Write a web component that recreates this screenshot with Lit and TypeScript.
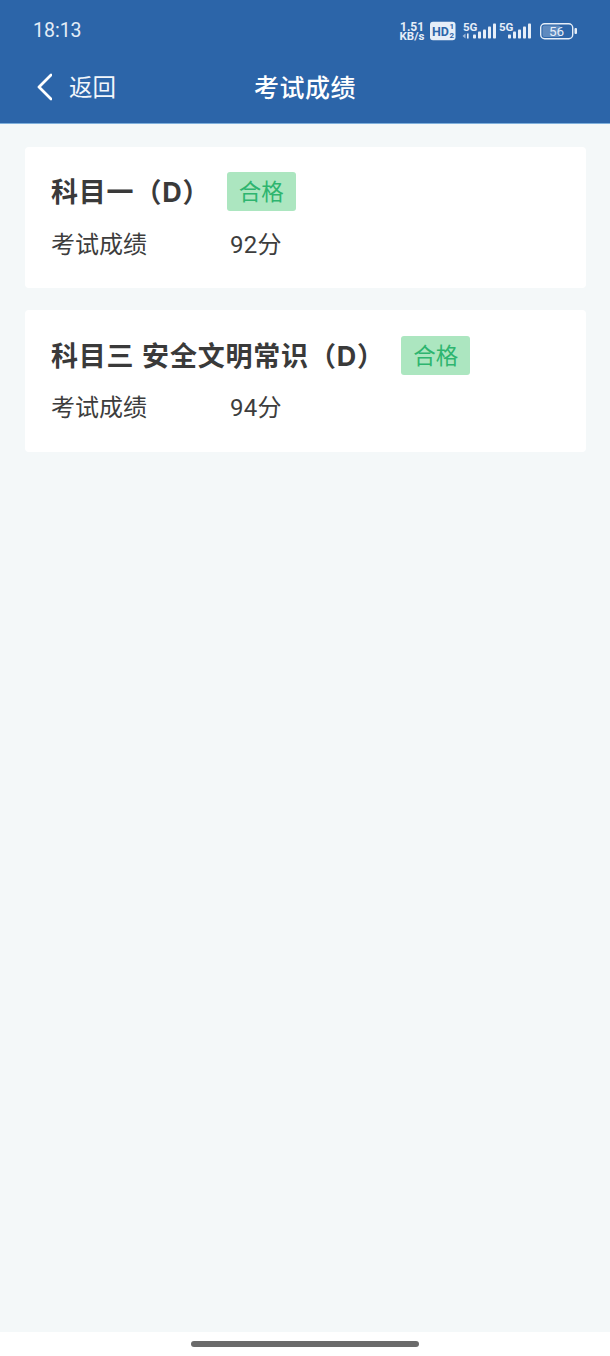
import { LitElement, html, css, svg } from "lit";
import { customElement } from "lit/decorators.js";

const bars = (x: number) =>
  [4, 7, 9, 12, 15].map(
    (h, i) => svg`<rect x=${x + i * 5} y=${20.5 - h} width="3" height=${h} rx="0.8" fill="#e6eef8"></rect>`
  );

@customElement("app-root")
export class AppRoot extends LitElement {
  static styles = css`
    :host {
      display: flex;
      flex-direction: column;
      width: 610px;
      height: 1356px;
      background: #f4f8f9;
      font-family: Roboto, "Noto Sans CJK SC", "Noto Sans", sans-serif;
      color: #333;
    }
    .head {
      height: 123px;
      background: #2c65a9;
      color: #fff;
      display: flex;
      flex-direction: column;
      flex: none;
      border-bottom: 1px solid #7fb0dc;
    }
    .status {
      height: 60px;
      display: flex;
      align-items: center;
      justify-content: space-between;
      padding: 0 32px 0 33px;
      flex: none;
    }
    .time {
      font-size: 19.5px;
      color: #e4edf7;
    }
    .icons {
      display: flex;
      align-items: center;
      margin-top: -1px;
    }
    .nav {
      position: relative;
      height: 56px;
      box-sizing: border-box;
      padding: 0 0 2px 36px;
      display: flex;
      align-items: center;
    }
    .back {
      display: flex;
      align-items: center;
      gap: 17px;
      font-size: 23.5px;
      color: #f2f6fb;
    }
    .back span {
      padding-bottom: 2px;
    }
    .back svg {
      display: block;
    }
    .title {
      position: absolute;
      left: 0;
      right: 0;
      padding-bottom: 2px;
      text-align: center;
      font-size: 25px;
      font-weight: 500;
      letter-spacing: 0.5px;
    }
    .list {
      flex: 1;
      padding: 22.5px 24px 0 25px;
      display: flex;
      flex-direction: column;
      gap: 22.8px;
    }
    .card {
      background: #fff;
      border-radius: 4px;
      height: 141.2px;
      box-sizing: border-box;
      padding: 25.5px 26px 0;
    }
    .row {
      display: flex;
      align-items: center;
      height: 39px;
    }
    .name {
      font-family: Inter, "Noto Sans CJK SC", sans-serif;
      font-size: 27px;
      font-weight: 700;
      letter-spacing: 0.8px;
      word-spacing: 0.5px;
      color: #3a3a3a;
      white-space: pre;
      padding-bottom: 2px;
    }
    .tag {
      background: #ace6c0;
      color: #2eb56f;
      font-size: 22.5px;
      border-radius: 3px;
      width: 69px;
      height: 39px;
      box-sizing: border-box;
      padding-bottom: 3px;
      display: flex;
      align-items: center;
      justify-content: center;
      margin-left: 16.5px;
    }
    .score {
      display: flex;
      align-items: center;
      margin-top: 17px;
      height: 28px;
      font-size: 24px;
      color: #3d3d3d;
    }
    .score .label {
      width: 179px;
    }
    .score .value {
      letter-spacing: 0.3px;
    }
    .foot {
      height: 24px;
      box-sizing: border-box;
      background: #fff;
      flex: none;
      display: flex;
      justify-content: center;
      padding-top: 9px;
    }
    .pill {
      width: 228px;
      height: 6px;
      border-radius: 3px;
      background: #6b6b6b;
    }
    .sb {
      font-family: Roboto, sans-serif;
      font-weight: 700;
    }
  `;

  private renderStatusIcons() {
    return svg`<svg width="179" height="24" viewBox="0 0 179 24">
      <text class="sb" x="1" y="12.7" font-size="12" fill="#e6eef8">1.51</text>
      <text class="sb" x="0.5" y="22.3" font-size="11.5" fill="#e6eef8">KB/s</text>
      <rect x="31" y="3.7" width="25.5" height="18.5" rx="3" fill="#e6eef8"></rect>
      <text class="sb" x="33" y="17.5" font-size="12.5" fill="#2c65a9">HD</text>
      <text class="sb" x="50.5" y="10.8" font-size="8" fill="#2c65a9">1</text>
      <text class="sb" x="50.5" y="20" font-size="8" fill="#2c65a9">2</text>
      <text class="sb" x="64" y="13" font-size="11.5" fill="#e6eef8">5G</text>
      <path d="M63.5 18l3-2.5v5z" fill="#9db9da"></path>
      <rect x="68" y="15.5" width="1.6" height="5" fill="#e6eef8"></rect>
      ${bars(74)}
      <text class="sb" x="100" y="13" font-size="11.5" fill="#e6eef8">5G</text>
      ${bars(109)}
      <rect x="141.7" y="5.7" width="32" height="15" rx="4" fill="none" stroke="#e6eef8" stroke-width="1.4"></rect>
      <rect x="143.5" y="7.5" width="18" height="11.4" rx="2" fill="#e6eef8" opacity="0.28"></rect>
      <text x="150" y="18" font-size="13.5" fill="#e6eef8" font-family="Roboto, sans-serif">56</text>
      <rect x="175.5" y="10" width="2.5" height="6" rx="1" fill="#e6eef8"></rect>
    </svg>`;
  }

  private card(name: string, score: string) {
    return html`<div class="card">
      <div class="row"><span class="name">${name}</span><span class="tag">合格</span></div>
      <div class="score"><span class="label">考试成绩</span><span class="value">${score}</span></div>
    </div>`;
  }

  render() {
    return html`
      <div class="head">
        <div class="status">
          <span class="time">18:13</span>
          <div class="icons">${this.renderStatusIcons()}</div>
        </div>
        <div class="nav">
          <div class="back">
            <svg width="16" height="28" viewBox="0 0 16 28">
              <path d="M15 2 3 14l12 12" fill="none" stroke="#fff" stroke-width="2.8" stroke-linecap="round" stroke-linejoin="round"></path>
            </svg>
            <span>返回</span>
          </div>
          <div class="title">考试成绩</div>
        </div>
      </div>
      <div class="list">
        ${this.card("科目一（D）", "92分")}
        ${this.card("科目三 安全文明常识（D）", "94分")}
      </div>
      <div class="foot"><div class="pill"></div></div>
    `;
  }
}
